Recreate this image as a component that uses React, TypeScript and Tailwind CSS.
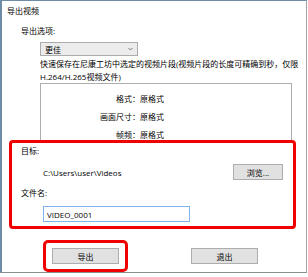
import React from "react";

export default function App() {
  return (
    <div className="w-[308px] h-[277px] bg-white overflow-hidden text-[8px] leading-[13px] text-black font-['Open_Sans','Noto_Sans_CJK_SC',sans-serif]">
      <div className="w-[307px] h-[273px] border-l-2 border-t border-r border-b border-l-[#6f8ba6] border-t-[#6f8ba6] border-r-[#a3a3a3] border-b-[#8f8f8f] flex flex-col">
        <div className="pl-[5px] pt-[3px]">导出视频</div>
        <div className="pl-[19px] mt-[7px]">导出选项:</div>
        <div className="ml-[38px] mt-[5px] w-[98px] h-[14px] border border-[#acacac] bg-[#ececec] flex items-center justify-between pl-[4px] pr-[4px]">
          <span>更佳</span>
          <svg width="5" height="4" viewBox="0 0 5 4">
            <path d="M0.5 1 L2.5 3 L4.5 1" fill="none" stroke="#606060" strokeWidth="0.8" />
          </svg>
        </div>
        <div className="ml-[38px] mt-[1px] whitespace-nowrap">
          快速保存在尼康工坊中选定的视频片段(视频片段的长度可精确到秒，仅限
          <br />
          H.264/H.265视频文件)
        </div>
        <div className="ml-[38px] w-[252px] h-[62px] border-l border-t border-r border-[#adadad] pt-[8px] flex flex-col gap-[5px]">
          {[
            ["格式：", "原格式"],
            ["画面尺寸：", "原格式"],
            ["帧频：", "原格式"],
          ].map(([k, v]) => (
            <div key={k} className="flex">
              <span className="w-[99px] text-right">{k}</span>
              <span>{v}</span>
            </div>
          ))}
        </div>
        <div className="relative z-10 -mt-[3px] ml-[7px] w-[287px] h-[92px] border-[3px] border-[#f00000] rounded-[4px] bg-white flex flex-col pt-[1px]">
          <div className="pl-[9px]">目标:</div>
          <div className="mt-[6px] h-[18px] flex items-center justify-between pl-[31px] pr-[10px]">
            <span>C:\Users\user\Videos</span>
            <div className="w-[50px] h-[16px] border border-[#adadad] bg-[#e1e1e1] flex items-center justify-center">浏览...</div>
          </div>
          <div className="pl-[9px] mt-[5px]">文件名:</div>
          <div className="ml-[31px] mt-[7px] w-[147px] h-[16px] border border-[#7eb4ea] bg-white flex items-center pl-[3px]">VIDEO_0001</div>
        </div>
        <div className="relative z-10 mt-[11px] flex items-start">
          <div className="ml-[41px] w-[85px] h-[32px] border-[3px] border-[#f00000] rounded-[5px] bg-white pl-[6px] pt-[5px]">
            <div className="w-[67px] h-[16px] border border-[#adadad] bg-[#e1e1e1] flex items-center justify-center">导出</div>
          </div>
          <div className="ml-[63px] mt-[8px] w-[67px] h-[16px] border border-[#adadad] bg-[#e1e1e1] flex items-center justify-center">退出</div>
        </div>
      </div>
    </div>
  );
}
